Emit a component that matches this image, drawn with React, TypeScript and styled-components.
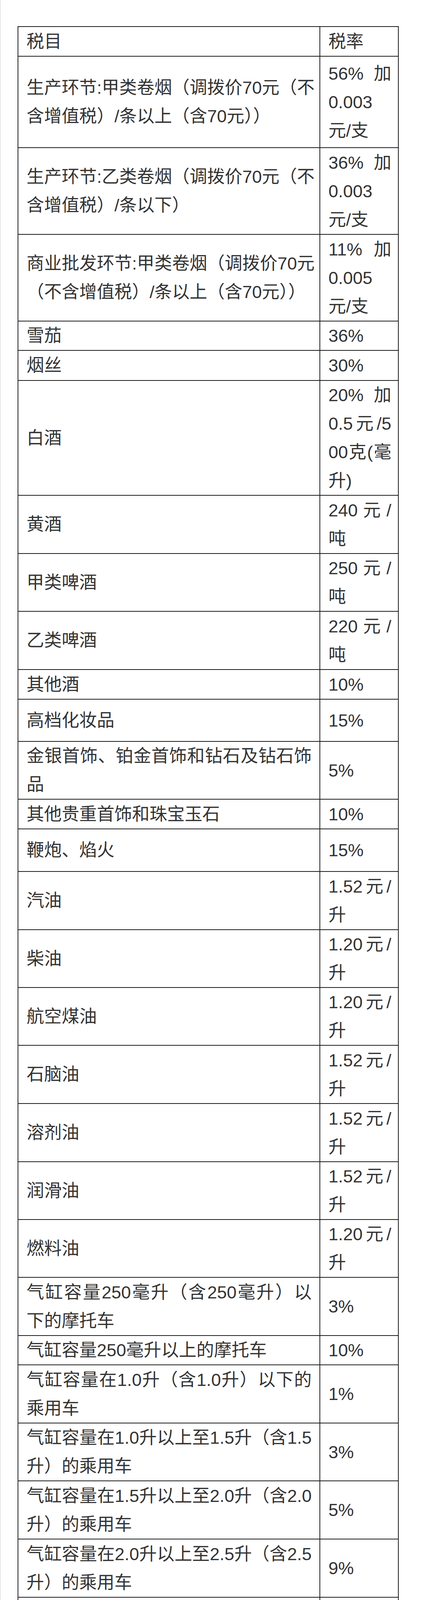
import React from "react";
import styled, { createGlobalStyle } from "styled-components";

const GlobalStyle = createGlobalStyle`
  html, body {
    margin: 0;
    padding: 0;
    background: #ffffff;
  }
`;

const Page = styled.div`
  min-height: 5501px;
  box-sizing: border-box;
  padding: 67px 0 0 43px;
  border-left: 2px solid #e6e6e6;
  font-family: "Liberation Sans", "Noto Sans CJK SC", sans-serif;
`;

const Table = styled.table`
  border-collapse: collapse;
  table-layout: fixed;
  width: 974px;
  color: #333333;
  font-size: 45px;
  line-height: 73px;
`;

// h is the row's outer height; the collapsed border adds 2px to the cell height
const Cell = styled.td<{ $h: number; $rate?: boolean }>`
  height: ${(p) => p.$h - 2}px;
  border: 2px solid #1d1d1d;
  padding: ${(p) => (p.$rate ? "0 17px 0 21px" : "0 20px 0 21px")};
  vertical-align: middle;
  white-space: nowrap;
`;

// lines that the source wrapped are justified to the cell width
const Line = styled.span<{ $full: boolean }>`
  display: block;
  text-align: left;
  text-align-last: ${(p) => (p.$full ? "justify" : "left")};
`;

type Row = { item: string[]; rate: string[]; h: number };

const yan = (a: string, b: string) => [a + " 加", b, "元/支"];
const sheng = (v: string) => [v + "元/", "升"];
const dun = (v: string) => [v + " 元 /", "吨"];

const ROWS: Row[] = [
  { item: ["税目"], rate: ["税率"], h: 76 },
  { item: ["生产环节:甲类卷烟（调拨价70元（不", "含增值税）/条以上（含70元））"], rate: yan("56%", "0.003"), h: 234 },
  { item: ["生产环节:乙类卷烟（调拨价70元（不", "含增值税）/条以下）"], rate: yan("36%", "0.003"), h: 222 },
  { item: ["商业批发环节:甲类卷烟（调拨价70元", "（不含增值税）/条以上（含70元））"], rate: yan("11%", "0.005"), h: 222 },
  { item: ["雪茄"], rate: ["36%"], h: 75 },
  { item: ["烟丝"], rate: ["30%"], h: 77 },
  { item: ["白酒"], rate: ["20% 加", "0.5元/5", "00克(毫", "升)"], h: 293 },
  { item: ["黄酒"], rate: dun("240"), h: 149 },
  { item: ["甲类啤酒"], rate: dun("250"), h: 147 },
  { item: ["乙类啤酒"], rate: dun("220"), h: 149 },
  { item: ["其他酒"], rate: ["10%"], h: 76 },
  { item: ["高档化妆品"], rate: ["15%"], h: 108 },
  { item: ["金银首饰、铂金首饰和钻石及钻石饰", "品"], rate: ["5%"], h: 148 },
  { item: ["其他贵重首饰和珠宝玉石"], rate: ["10%"], h: 76 },
  { item: ["鞭炮、焰火"], rate: ["15%"], h: 109 },
  { item: ["汽油"], rate: sheng("1.52"), h: 149 },
  { item: ["柴油"], rate: sheng("1.20"), h: 148 },
  { item: ["航空煤油"], rate: sheng("1.20"), h: 148 },
  { item: ["石脑油"], rate: sheng("1.52"), h: 149 },
  { item: ["溶剂油"], rate: sheng("1.52"), h: 149 },
  { item: ["润滑油"], rate: sheng("1.52"), h: 148 },
  { item: ["燃料油"], rate: sheng("1.20"), h: 148 },
  { item: ["气缸容量250毫升（含250毫升）以", "下的摩托车"], rate: ["3%"], h: 149 },
  { item: ["气缸容量250毫升以上的摩托车"], rate: ["10%"], h: 75 },
  { item: ["气缸容量在1.0升（含1.0升）以下的", "乘用车"], rate: ["1%"], h: 149 },
  { item: ["气缸容量在1.0升以上至1.5升（含1.5", "升）的乘用车"], rate: ["3%"], h: 148 },
  { item: ["气缸容量在1.5升以上至2.0升（含2.0", "升）的乘用车"], rate: ["5%"], h: 149 },
  { item: ["气缸容量在2.0升以上至2.5升（含2.5", "升）的乘用车"], rate: ["9%"], h: 149 },
  { item: ["气缸容量在2.5升以上至3.0升（含3.0", "升）的乘用车"], rate: ["12%"], h: 148 },
  { item: ["气缸容量在3.0升以上至4.0升（含4.0", "升）的乘用车"], rate: ["25%"], h: 148 },
  { item: ["气缸容量在4.0升以上的乘用车"], rate: ["40%"], h: 76 },
  { item: ["中轻型商用客车"], rate: ["5%"], h: 107 },
  { item: ["高尔夫球及球具"], rate: ["10%"], h: 108 },
  { item: ["高档手表"], rate: ["20%"], h: 76 },
  { item: ["游艇"], rate: ["10%"], h: 76 },
  { item: ["木制一次性筷子"], rate: ["5%"], h: 108 },
  { item: ["实木地板"], rate: ["5%"], h: 76 },
  { item: ["电池"], rate: ["4%"], h: 76 },
  { item: ["涂料"], rate: ["4%"], h: 75 },
  // last rate cell ends with an empty line in the source
  { item: ["商业批发环节:乙类卷烟（调拨价70元", "（不含增值税）/条以下）"], rate: [...yan("11%", "0.005"), ""], h: 294 },
];

const Lines = ({ lines }: { lines: string[] }) => {
  const last = lines.reduce((acc, l, i) => (l ? i : acc), 0);
  return (
    <>
      {lines.map((l, i) => (
        <Line key={i} $full={i < last}>
          {l || "\u00a0"}
        </Line>
      ))}
    </>
  );
};

const App = () => {
  return (
    <Page>
      <GlobalStyle />
      <Table>
        <colgroup>
          <col style={{ width: 773 }} />
          <col style={{ width: 201 }} />
        </colgroup>
        <tbody>
          {ROWS.map((r, i) => (
            <tr key={i}>
              <Cell $h={r.h}>
                <Lines lines={r.item} />
              </Cell>
              <Cell $h={r.h} $rate>
                <Lines lines={r.rate} />
              </Cell>
            </tr>
          ))}
        </tbody>
      </Table>
    </Page>
  );
};

export default App;
